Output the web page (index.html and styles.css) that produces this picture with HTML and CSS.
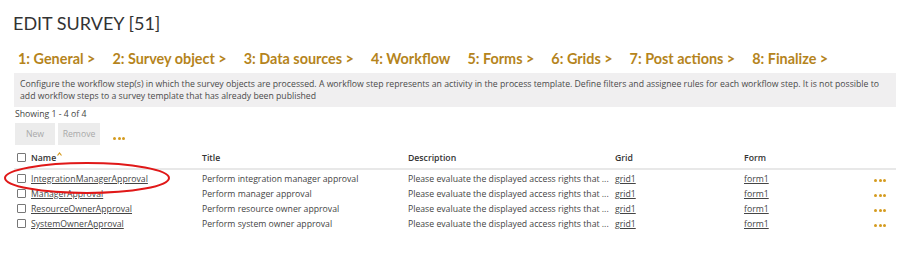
FILE: index.html
```html
<!DOCTYPE html>
<html lang="en">
<head>
  <meta charset="utf-8">
  <title>Edit survey</title>
  <link rel="stylesheet" href="styles.css">
</head>
<body>
  <div class="page">
    <h1 class="title">EDIT SURVEY [51]</h1>

    <div class="steps">
      <span class="step">1: General &gt;</span>
      <span class="step">2: Survey object &gt;</span>
      <span class="step">3: Data sources &gt;</span>
      <span class="step">4: Workflow</span>
      <span class="step">5: Forms &gt;</span>
      <span class="step">6: Grids &gt;</span>
      <span class="step">7: Post actions &gt;</span>
      <span class="step">8: Finalize &gt;</span>
    </div>

    <div class="info">
      Configure the workflow step(s) in which the survey objects are processed. A workflow step represents an activity in the process template. Define filters and assignee rules for each workflow step. It is not possible to
      add workflow steps to a survey template that has already been published
    </div>

    <div class="showing">Showing 1 - 4 of 4</div>

    <div class="toolbar">
      <button class="btn btn-new" disabled>New</button>
      <button class="btn btn-remove" disabled>Remove</button>
      <span class="more"><i></i><i></i><i></i></span>
    </div>

    <table class="grid">
      <thead>
        <tr>
          <th class="col-name"><span class="cb"></span>Name<svg class="sort" width="5" height="4" viewBox="0 0 5 4"><path d="M0.5 3.5 L2.5 1 L4.5 3.5" fill="none" stroke="#d59b1f" stroke-width="1.2"/></svg></th>
          <th class="col-title">Title</th>
          <th class="col-desc">Description</th>
          <th class="col-grid">Grid</th>
          <th class="col-form">Form</th>
          <th class="col-act"></th>
        </tr>
      </thead>
      <tbody>
        <tr>
          <td class="col-name"><span class="cb"></span><a href="#">IntegrationManagerApproval</a></td>
          <td>Perform integration manager approval</td>
          <td>Please evaluate the displayed access rights that ...</td>
          <td><a href="#">grid1</a></td>
          <td><a href="#">form1</a></td>
          <td class="col-act"><span class="more"><i></i><i></i><i></i></span></td>
        </tr>
        <tr>
          <td class="col-name"><span class="cb"></span><a href="#">ManagerApproval</a></td>
          <td>Perform manager approval</td>
          <td>Please evaluate the displayed access rights that ...</td>
          <td><a href="#">grid1</a></td>
          <td><a href="#">form1</a></td>
          <td class="col-act"><span class="more"><i></i><i></i><i></i></span></td>
        </tr>
        <tr>
          <td class="col-name"><span class="cb"></span><a href="#">ResourceOwnerApproval</a></td>
          <td>Perform resource owner approval</td>
          <td>Please evaluate the displayed access rights that ...</td>
          <td><a href="#">grid1</a></td>
          <td><a href="#">form1</a></td>
          <td class="col-act"><span class="more"><i></i><i></i><i></i></span></td>
        </tr>
        <tr>
          <td class="col-name"><span class="cb"></span><a href="#">SystemOwnerApproval</a></td>
          <td>Perform system owner approval</td>
          <td>Please evaluate the displayed access rights that ...</td>
          <td><a href="#">grid1</a></td>
          <td><a href="#">form1</a></td>
          <td class="col-act"><span class="more"><i></i><i></i><i></i></span></td>
        </tr>
      </tbody>
    </table>

    <!-- hand drawn highlight round the first row -->
    <svg class="mark" width="170" height="34" viewBox="0 0 170 34">
      <ellipse cx="85" cy="17" rx="82" ry="15" fill="none" stroke="#e01818" stroke-width="2"/>
    </svg>
  </div>
</body>
</html>
```

FILE: styles.css
```css
html {
  font-family: "Open Sans", "Liberation Sans", sans-serif;
  color: #444;
}
body {
  margin: 0;
  background: #fff;
}
.page {
  position: relative;
  padding: 13px 20px 0 14px;
}
.title {
  margin: 0 0 0 -1px;
  font-family: Lato, "Liberation Sans", sans-serif;
  font-weight: 400;
  font-size: 18px;
  line-height: 20px;
  color: #333;
}
.steps {
  display: flex;
  gap: 17px;
  margin: 16px 0 0 4px;
  height: 20px;
  font-family: Lato, "Liberation Sans", sans-serif;
  font-weight: 700;
  font-size: 14.4px;
  line-height: 20px;
  color: #b5841c;
}
.info {
  margin-top: 4px;
  padding: 5px 6px 5px 6px;
  background: #f0eff0;
  font-size: 8.7px;
  line-height: 12px;
  color: #4a4a4a;
}
.showing {
  margin: 1px 0 0 1px;
  font-size: 8.7px;
  line-height: 12px;
}
.toolbar {
  display: flex;
  align-items: center;
  gap: 3px;
  margin: 3px 0 0 1px;
}
.btn {
  height: 22px;
  padding: 0;
  border: none;
  background: #ececec;
  font-family: "Open Sans", "Liberation Sans", sans-serif;
  font-size: 8.7px;
  color: #a9a9a9;
}
.btn-new { width: 40px; }
.btn-remove { width: 42px; }
.toolbar .more {
  margin: 8px 0 0 10px;
}
.more {
  display: inline-flex;
  gap: 1.5px;
}
.more i {
  width: 3px;
  height: 3px;
  border-radius: 50%;
  background: #d59b1f;
}
.grid {
  width: 882px;
  margin-top: 2px;
  border-collapse: collapse;
  font-size: 8.7px;
}
.grid th {
  text-align: left;
  font-weight: 600;
  color: #333;
  height: 21px;
  padding: 0;
  border-bottom: 2px solid #e8e8e8;
}
.grid td {
  height: 15px;
  line-height: 15px;
  padding: 0;
  white-space: nowrap;
}
.grid tbody tr:first-child td {
  padding-top: 2px;
}
.grid a {
  color: #444;
}
.col-name { width: 188px; }
.col-title { width: 206px; }
.col-desc { width: 207px; }
.col-grid { width: 129px; }
.col-form { width: 129px; }
.grid .col-act {
  text-align: right;
  padding-right: 10px;
}
.cb {
  display: inline-block;
  width: 7px;
  height: 7px;
  margin: 0 5px 0 3px;
  border: 1px solid #777;
  border-radius: 1px;
  vertical-align: -1px;
}
.sort {
  margin-left: 1px;
  vertical-align: 5px;
}
.mark {
  position: absolute;
  left: 2px;
  top: 161px;
}
```
